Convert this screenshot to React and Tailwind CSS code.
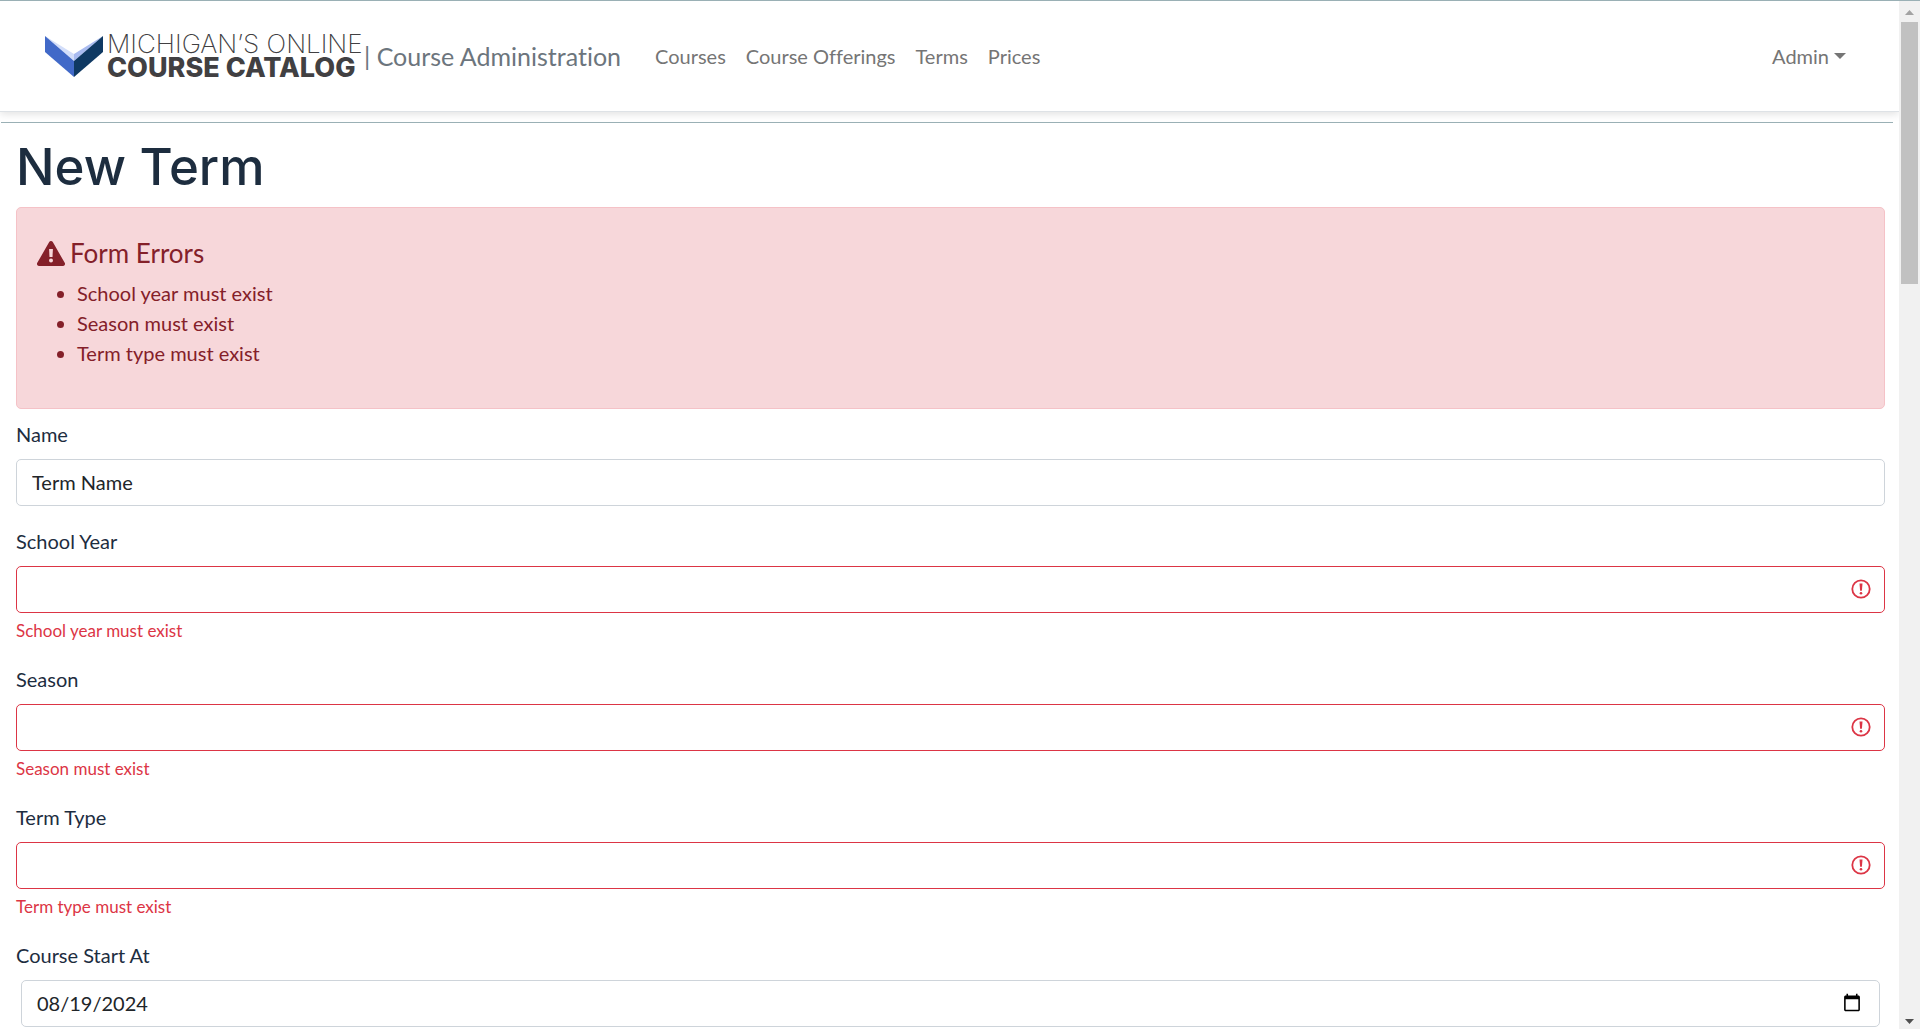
import React from "react";

const navLinks = ["Courses", "Course Offerings", "Terms", "Prices"];

const errorFields = [
  { id: "school_year", label: "School Year", error: "School year must exist" },
  { id: "season", label: "Season", error: "Season must exist" },
  { id: "term_type", label: "Term Type", error: "Term type must exist" },
];

const Logo = () => (
  <span className="flex items-center gap-1">
    <svg width="58" height="41" viewBox="0 0 58 41" aria-hidden="true">
      <path d="M0 0L29 18V25Z" fill="#d3defa" />
      <path d="M58 0L29 18V25Z" fill="#a9bbf0" />
      <path d="M0 0L29 25V41L0 16Z" fill="#4169c8" />
      <path d="M58 0L29 25V41L58 16Z" fill="#0f3963" />
    </svg>
    <span className="flex w-[253px] flex-col font-['Inter'] leading-6 whitespace-nowrap text-[#414042]">
      <span className="text-[26px] font-extralight">MICHIGAN’S ONLINE</span>
      <span className="text-[27px] font-extrabold">COURSE CATALOG</span>
    </span>
  </span>
);

const Navbar = () => {
  return (
    <header className="relative flex h-[111px] items-center border-b border-[#dee2e6] pr-[53px] pl-[45px] shadow-[0_2px_8px_rgba(0,0,0,0.12)]">
      <a href="#" className="flex items-center text-[25px] text-[#6c757d]">
        <Logo />
        <span className="ml-1 whitespace-nowrap">| Course Administration</span>
      </a>
      <nav className="ml-[34px] flex gap-5 text-[#757575]">
        {navLinks.map((link) => (
          <a key={link} href="#" className="whitespace-nowrap">
            {link}
          </a>
        ))}
      </nav>
      <button className="ml-auto flex items-center gap-[5px] text-[#757575]">
        Admin
        <svg width="12" height="6" viewBox="0 0 12 6" aria-hidden="true">
          <path d="M0 0H12L6 6Z" fill="currentColor" />
        </svg>
      </button>
    </header>
  );
};

const FormErrors = () => {
  return (
    <div
      role="alert"
      className="mb-[10px] rounded-[5px] border border-[#f5c2c7] bg-[#f7d7da] px-5 pt-[29px] pb-10 text-[#842029]"
    >
      <h2 className="mb-[9px] flex items-center gap-[5px] text-[26px] leading-[32px]">
        <svg width="28" height="25" viewBox="0 0 28 25" aria-hidden="true">
          <path
            d="M12.2 1.1a2.1 2.1 0 0 1 3.6 0L27.7 21.8a2.1 2.1 0 0 1-1.8 3.2H2.1A2.1 2.1 0 0 1 .3 21.8Z"
            fill="currentColor"
          />
          <path d="M12.1 8h3.8l-.4 8h-3Z" fill="#f7d7da" />
          <circle cx="14" cy="19.6" r="2" fill="#f7d7da" />
        </svg>
        Form Errors
      </h2>
      <ul className="list-disc pl-10">
        {errorFields.map((field) => (
          <li key={field.id}>{field.error}</li>
        ))}
      </ul>
    </div>
  );
};

const SelectField = ({ id, label, error }) => {
  return (
    <div className="mb-5">
      <label htmlFor={id} className="mb-[10px] block">
        {label}
      </label>
      <div className="relative">
        <select
          id={id}
          aria-invalid="true"
          className="block h-[47px] w-full appearance-none rounded-[5px] border border-[#dc3545] bg-white px-[15px]"
        >
          <option value=""></option>
        </select>
        <svg
          width="20"
          height="20"
          viewBox="0 0 20 20"
          className="pointer-events-none absolute top-[13px] right-[14px]"
          aria-hidden="true"
        >
          <circle cx="10" cy="10" r="8.7" fill="none" stroke="#dc3545" strokeWidth="1.8" />
          <path d="M8.5 4.5h3l-.6 7.3H9.1Z" fill="#dc3545" />
          <circle cx="10" cy="14.2" r="1.3" fill="#dc3545" />
        </svg>
      </div>
      <p className="mt-1 text-[17px] leading-[27px] text-[#dc3545]">{error}</p>
    </div>
  );
};

const Scrollbar = () => (
  <div className="flex w-[21px] shrink-0 flex-col items-center justify-between bg-[#f1f1f1] pt-[9px] pb-[5px]">
    <div className="flex h-full w-full flex-col items-center gap-[7px]">
      <svg width="9" height="5" viewBox="0 0 9 5" aria-hidden="true">
        <path d="M0 5H9L4.5 0Z" fill="#a3a3a3" />
      </svg>
      <div className="h-[262px] w-[17px] bg-[#c1c1c1]" />
    </div>
    <svg className="shrink-0" width="9" height="5" viewBox="0 0 9 5" aria-hidden="true">
      <path d="M0 0H9L4.5 5Z" fill="#505050" />
    </svg>
  </div>
);

const App = () => {
  return (
    <div className="flex h-screen overflow-hidden border-t border-[#9ab0b5] bg-white font-['Lato',sans-serif] text-[20px] leading-[30px] text-[#212529] [font-variant-ligatures:none]">
      <div className="min-w-0 flex-1 overflow-hidden">
        <Navbar />
        <hr className="mt-[10px] mr-[6px] ml-px border-[#9ab0b5]" />
        <main className="pr-[14px] pl-4 text-[#1d2d3f]">
          <h1 className="mt-[14px] mb-[10px] font-['Inter'] text-[51px] leading-[60px] font-medium">
            New Term
          </h1>
          <FormErrors />
          <form>
            <div className="mb-5">
              <label htmlFor="name" className="mb-[10px] block">
                Name
              </label>
              <input
                id="name"
                type="text"
                defaultValue="Term Name"
                className="block h-[47px] w-full rounded-[5px] border border-[#ced4da] px-[15px] pb-0.5 text-[#212529]"
              />
            </div>
            {errorFields.map((field) => (
              <SelectField key={field.id} {...field} />
            ))}
            <label htmlFor="course_start_at" className="mb-[10px] block">
              Course Start At
            </label>
            <div className="px-[5px]">
              <input
                id="course_start_at"
                type="date"
                defaultValue="2024-08-19"
                className="block h-[47px] w-full rounded-[5px] border border-[#ced4da] px-[15px] pb-0.5 text-[#212529] [&::-webkit-datetime-edit-day-field]:p-0 [&::-webkit-datetime-edit-month-field]:p-0 [&::-webkit-datetime-edit-year-field]:p-0"
              />
            </div>
          </form>
        </main>
      </div>
      <Scrollbar />
    </div>
  );
};

export default App;
